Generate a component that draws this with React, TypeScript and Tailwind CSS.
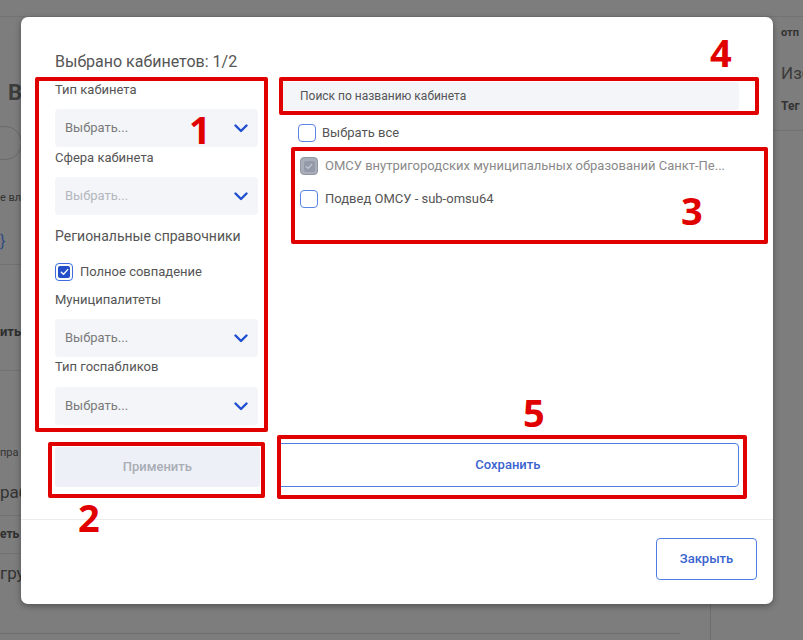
import React from "react";

const font = { fontFamily: "Roboto, 'Noto Sans', sans-serif" };

function Chevron() {
  return (
    <svg width="14" height="9" viewBox="0 0 14 9" fill="none">
      <path d="M1.5 1.5 L7 7 L12.5 1.5" stroke="#1f4fd0" strokeWidth="2.4" strokeLinecap="round" strokeLinejoin="round" />
    </svg>
  );
}

function Select({ disabled }: { disabled?: boolean }) {
  return (
    <div className="flex h-[38px] items-center justify-between rounded-[4px] bg-[#f3f5f9] pl-[10px] pr-[10px]">
      <span className={disabled ? "text-[13px] text-[#b4b7bd]" : "text-[13px] text-[#7a7a7a]"}>Выбрать...</span>
      <Chevron />
    </div>
  );
}

function Label({ children }: { children: React.ReactNode }) {
  return <div className="h-[16px] text-[13px] leading-[16px] text-[#555]">{children}</div>;
}

function EmptyBox() {
  return <div className="h-[18px] w-[18px] shrink-0 rounded-[4px] border-[1.5px] border-[#5a85e6] bg-white" />;
}

function CheckedBox() {
  return (
    <div className="flex h-[18px] w-[18px] shrink-0 items-center justify-center rounded-[4px] border-[1.5px] border-[#3d6ae0] bg-white">
      <div className="flex h-[12px] w-[12px] items-center justify-center rounded-[2px] bg-[#2350c8]">
        <svg width="9" height="8" viewBox="0 0 9 8" fill="none">
          <path d="M1.3 4.2 L3.5 6.2 L7.7 1.6" stroke="white" strokeWidth="1.4" strokeLinecap="round" strokeLinejoin="round" />
        </svg>
      </div>
    </div>
  );
}

function DisabledBox() {
  return (
    <div className="flex h-[18px] w-[18px] shrink-0 items-center justify-center rounded-[4px] border-[1.5px] border-[#8f96a4] bg-[#a9aeb8]">
      <div className="flex h-[11px] w-[11px] items-center justify-center rounded-[2px] bg-[#949aa7]">
        <svg width="8" height="7" viewBox="0 0 8 7" fill="none">
          <path d="M1.2 3.6 L3.1 5.4 L6.8 1.4" stroke="#c5c9d1" strokeWidth="1.2" strokeLinecap="round" strokeLinejoin="round" />
        </svg>
      </div>
    </div>
  );
}

function RedBox({ className }: { className: string }) {
  return <div className={"pointer-events-none absolute rounded-[2px] border-[4px] border-[#e00000] " + className} />;
}

function RedNum({ className, children }: { className: string; children: React.ReactNode }) {
  return (
    <div
      className={"pointer-events-none absolute text-[38px] font-bold leading-none text-[#e00000] " + className}
      style={{ fontFamily: "'Open Sans', 'Liberation Sans', sans-serif" }}
    >
      {children}
    </div>
  );
}

export default function App() {
  return (
    <div className="relative h-[640px] w-[803px] overflow-hidden bg-[#7d7d7d]" style={font}>
      {/* faint page behind overlay */}
      <div className="absolute left-0 top-[16px] h-px w-[803px] bg-[#737373]" />
      <div className="absolute left-[8px] top-[76px] text-[22px] font-bold text-[#3d3d3d]">В</div>
      <div className="absolute left-[-14px] top-[126px] h-[34px] w-[36px] rounded-full border border-[#6a6a6a]" />
      <div className="absolute left-0 top-[190px] text-[11px] text-[#333]">е вл</div>
      <div className="absolute left-0 top-[230px] text-[16px] text-[#2f4a80]">{"}"}</div>
      <div className="absolute left-0 top-[264px] h-px w-[21px] bg-[#727272]" />
      <div className="absolute left-0 top-[322px] text-[13px] font-bold text-[#2e2e2e]">ить</div>
      <div className="absolute left-0 top-[370px] h-px w-[21px] bg-[#727272]" />
      <div className="absolute left-0 top-[445px] text-[11px] text-[#333]">пра</div>
      <div className="absolute left-0 top-[480px] text-[17px] text-[#333]">раб</div>
      <div className="absolute left-0 top-[515px] h-px w-[21px] bg-[#727272]" />
      <div className="absolute left-0 top-[525px] text-[12px] font-bold text-[#2e2e2e]">еть</div>
      <div className="absolute left-0 top-[553px] h-px w-[21px] bg-[#727272]" />
      <div className="absolute left-0 top-[561px] text-[17px] text-[#333]">груп</div>
      <div className="absolute left-0 top-[633px] h-px w-[680px] bg-[#6e6e6e]" />
      <div className="absolute left-[710px] top-[604px] h-[40px] w-px bg-[#6e6e6e]" />
      <div className="absolute left-[781px] top-[25px] text-[11px] font-bold text-[#333]">отп</div>
      <div className="absolute left-[781px] top-[61px] text-[17px] text-[#3a3a3a]">Изб</div>
      <div className="absolute left-[781px] top-[97px] text-[12px] font-bold text-[#333]">Тег</div>
      <div className="absolute left-[773px] top-[130px] h-px w-[30px] bg-[#727272]" />

      {/* modal */}
      <div className="absolute left-[21px] top-[17px] flex h-[587px] w-[752px] flex-col rounded-[7px] bg-white shadow-[0_2px_6px_rgba(0,0,0,0.35)]">
        <div className="px-[34px] pt-[35px]">
          <div className="h-[20px] text-[16px] leading-[20px] text-[#555]">Выбрано кабинетов: 1/2</div>
          <div className="mt-[10px] flex gap-[23px]">
            <div className="flex w-[207px] flex-col">
              <Label>Тип кабинета</Label>
              <div className="mt-[11px]"><Select /></div>
              <div className="mt-[3px]"><Label>Сфера кабинета</Label></div>
              <div className="mt-[11px]"><Select disabled /></div>
              <div className="mt-[11px] h-[20px] text-[14px] leading-[20px] text-[#555]">Региональные справочники</div>
              <div className="mt-[17px] flex h-[18px] items-center gap-[7px]">
                <CheckedBox />
                <span className="text-[13px] text-[#555]">Полное совпадение</span>
              </div>
              <div className="mt-[11px]"><Label>Муниципалитеты</Label></div>
              <div className="mt-[11px]"><Select /></div>
              <div className="mt-[2px]"><Label>Тип госпабликов</Label></div>
              <div className="mt-[12px]"><Select /></div>
            </div>
            <div className="flex w-[467px] flex-col">
              <div className="flex h-[28px] items-center rounded-[3px] bg-[#f3f5f9] pl-[19px] text-[12px] text-[#555]">
                Поиск по названию кабинета
              </div>
              <div className="mt-[14px] flex h-[18px] items-center gap-[6px] pl-[17px]">
                <EmptyBox />
                <span className="text-[13px] text-[#555]">Выбрать все</span>
              </div>
              <div className="mt-[15px] flex h-[18px] items-center gap-[7px] pl-[19px]">
                <DisabledBox />
                <span className="text-[13px] text-[#8a8a8a]">ОМСУ внутригородских муниципальных образований Санкт-Пе...</span>
              </div>
              <div className="mt-[15px] flex h-[18px] items-center gap-[7px] pl-[19px]">
                <EmptyBox />
                <span className="text-[13px] text-[#555]">Подвед ОМСУ - sub-omsu64</span>
              </div>
            </div>
          </div>
          <div className="mt-[18px] flex items-end gap-[17px]">
            <div className="flex h-[40px] w-[205px] items-center justify-center rounded-[3px] bg-[#eef0f7] text-[13px] font-medium text-[#a9adb5]">
              Применить
            </div>
            <div className="flex h-[44px] w-[463px] items-center justify-center rounded-[4px] border border-[#4f7ee3] text-[13px] font-medium text-[#3a63cf]">
              Сохранить
            </div>
          </div>
        </div>
        <div className="mt-[32px] h-px bg-[#ececec]" />
        <div className="flex justify-end pr-[16px] pt-[18px]">
          <div className="flex h-[42px] w-[101px] items-center justify-center rounded-[4px] border-[1.5px] border-[#4f7ee3] text-[13px] font-medium text-[#3a63cf]">
            Закрыть
          </div>
        </div>
      </div>

      {/* annotations */}
      <RedBox className="left-[35px] top-[77px] h-[355px] w-[233px]" />
      <RedBox className="left-[279px] top-[77px] h-[38px] w-[480px]" />
      <RedBox className="left-[291px] top-[147px] h-[97px] w-[477px]" />
      <RedBox className="left-[48px] top-[442px] h-[56px] w-[217px]" />
      <RedBox className="left-[277px] top-[435px] h-[64px] w-[470px]" />
      <RedNum className="left-[189px] top-[110px]">1</RedNum>
      <RedNum className="left-[78px] top-[498px]">2</RedNum>
      <RedNum className="left-[681px] top-[191px]">3</RedNum>
      <RedNum className="left-[710px] top-[33px]">4</RedNum>
      <RedNum className="left-[523px] top-[393px]">5</RedNum>
    </div>
  );
}
